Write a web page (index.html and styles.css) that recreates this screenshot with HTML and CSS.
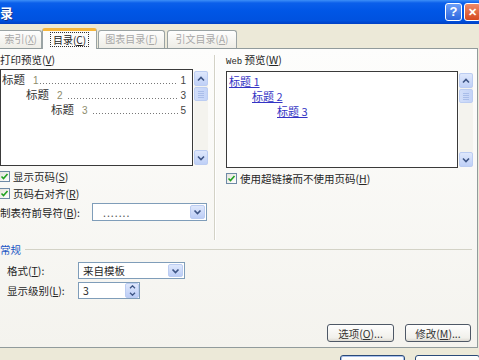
FILE: index.html
```html
<!DOCTYPE html>
<html lang="zh-CN">
<head>
  <meta charset="UTF-8">
  <title>索引和目录</title>
  <link rel="stylesheet" href="styles.css">
</head>
<body>
<div class="window">
  <div class="titlebar">
    <span class="title">索引和目录</span>
    <span class="caption-btn help">?</span>
    <span class="caption-btn close">✕</span>
  </div>

  <div class="tabs">
    <span class="tab t1">索引(<u>X</u>)</span>
    <span class="tab active"><span class="focus">目录(<u>C</u>)</span></span>
    <span class="tab t3">图表目录(<u>F</u>)</span>
    <span class="tab t4">引文目录(<u>A</u>)</span>
  </div>

  <div class="panel">
    <div class="previews">
      <div class="col print-col">
        <div class="label">打印预览(<u>V</u>)</div>
        <div class="preview-row">
          <div class="preview-box print">
            <div class="toc-line lvl1"><span class="h">标题</span><span class="n">1</span><span class="dots"></span><span class="pg">1</span></div>
            <div class="toc-line lvl2"><span class="h">标题</span><span class="n">2</span><span class="dots"></span><span class="pg">3</span></div>
            <div class="toc-line lvl3"><span class="h">标题</span><span class="n">3</span><span class="dots"></span><span class="pg">5</span></div>
          </div>
          <div class="scrollbar">
            <span class="sb-btn"><svg width="8" height="6" viewBox="0 0 8 6"><path d="M1 4.5 L4 1.5 L7 4.5" fill="none" stroke="#3e5585" stroke-width="1.6"/></svg></span>
            <span class="sb-thumb"></span>
            <span class="sb-track"></span>
            <span class="sb-btn"><svg width="8" height="6" viewBox="0 0 8 6"><path d="M1 1.5 L4 4.5 L7 1.5" fill="none" stroke="#3e5585" stroke-width="1.6"/></svg></span>
          </div>
        </div>
        <label class="check first"><span class="cbox"><svg width="9" height="9" viewBox="0 0 9 9"><path d="M1.5 4.5 L3.5 6.5 L7.5 2" fill="none" stroke="#21a121" stroke-width="1.6"/></svg></span>显示页码(<u>S</u>)</label>
        <label class="check"><span class="cbox"><svg width="9" height="9" viewBox="0 0 9 9"><path d="M1.5 4.5 L3.5 6.5 L7.5 2" fill="none" stroke="#21a121" stroke-width="1.6"/></svg></span>页码右对齐(<u>R</u>)</label>
        <div class="field leader-row">
          <span class="field-label">制表符前导符(<u>B</u>):</span>
          <div class="combo leader">
            <span class="combo-text">.......</span>
            <span class="combo-btn"><svg width="9" height="6" viewBox="0 0 9 6"><path d="M1.5 1.5 L4.5 4.5 L7.5 1.5" fill="none" stroke="#3e5585" stroke-width="1.7"/></svg></span>
          </div>
        </div>
      </div>

      <div class="vsep"></div>

      <div class="col web-col">
        <div class="label"><span class="web">Web</span> 预览(<u>W</u>)</div>
        <div class="preview-row">
          <div class="preview-box web-box">
            <div class="web-line lvl1"><a>标题 1</a></div>
            <div class="web-line lvl2"><a>标题 2</a></div>
            <div class="web-line lvl3"><a>标题 3</a></div>
          </div>
          <div class="scrollbar">
            <span class="sb-btn"><svg width="8" height="6" viewBox="0 0 8 6"><path d="M1 4.5 L4 1.5 L7 4.5" fill="none" stroke="#3e5585" stroke-width="1.6"/></svg></span>
            <span class="sb-thumb"></span>
            <span class="sb-track"></span>
            <span class="sb-btn"><svg width="8" height="6" viewBox="0 0 8 6"><path d="M1 1.5 L4 4.5 L7 1.5" fill="none" stroke="#3e5585" stroke-width="1.6"/></svg></span>
          </div>
        </div>
        <label class="check first"><span class="cbox"><svg width="9" height="9" viewBox="0 0 9 9"><path d="M1.5 4.5 L3.5 6.5 L7.5 2" fill="none" stroke="#21a121" stroke-width="1.6"/></svg></span>使用超链接而不使用页码(<u>H</u>)</label>
      </div>
    </div>

    <div class="section-head"><span>常规</span><span class="section-line"></span></div>

    <div class="field general-row first">
      <span class="field-label">格式(<u>T</u>):</span>
      <div class="combo format">
        <span class="combo-text">来自模板</span>
        <span class="combo-btn"><svg width="9" height="6" viewBox="0 0 9 6"><path d="M1.5 1.5 L4.5 4.5 L7.5 1.5" fill="none" stroke="#3e5585" stroke-width="1.7"/></svg></span>
      </div>
    </div>
    <div class="field general-row">
      <span class="field-label">显示级别(<u>L</u>):</span>
      <div class="combo spin">
        <span class="combo-text">3</span>
        <span class="spin-btn">
          <svg width="7" height="4" viewBox="0 0 7 4"><path d="M1 3.2 L3.5 0.8 L6 3.2" fill="none" stroke="#3e5585" stroke-width="1.3"/></svg>
          <svg width="7" height="4" viewBox="0 0 7 4"><path d="M1 0.8 L3.5 3.2 L6 0.8" fill="none" stroke="#3e5585" stroke-width="1.3"/></svg>
        </span>
      </div>
    </div>

    <div class="actions">
      <button class="btn options">选项(<u>O</u>)...</button>
      <button class="btn modify">修改(<u>M</u>)...</button>
    </div>
  </div>

  <div class="footer">
    <button class="btn big default">确定</button>
    <button class="btn big">取消</button>
  </div>
</div>
</body>
</html>
```

FILE: styles.css
```css
* {
  box-sizing: border-box;
}

html, body {
  margin: 0;
}

body {
  width: 479px;
  height: 360px;
  overflow: hidden;
  background-color: #ece9d8;
  font-family: "Noto Sans CJK SC", "Liberation Sans", sans-serif;
  font-size: 10.5px;
  color: #262626;
}

.window {
  width: 500px;
  margin-left: -12px;
}

/* title bar */
.titlebar {
  height: 24px;
  display: flex;
  align-items: center;
  padding-right: 7px;
  background: linear-gradient(#3d8ff8 0, #0b5fea 3px, #0056e6 45%, #0052df 85%, #0040c4 100%);
}

.title {
  flex: 1;
  margin-left: -40px;
  color: #fff;
  font-weight: bold;
  font-size: 13px;
  text-shadow: 1px 1px #10308a;
  white-space: nowrap;
}

.caption-btn {
  width: 17px;
  height: 18px;
  border: 1px solid #fff;
  border-radius: 3px;
  color: #fff;
  font: bold 13px/16px "Liberation Sans", sans-serif;
  text-align: center;
}

.help {
  background: linear-gradient(#6d9ff7, #2c66de);
  margin-right: 2px;
}

.close {
  background: linear-gradient(#ee8a68, #d5481f);
  font-size: 11px;
}

/* tabs */
.tabs {
  display: flex;
  align-items: flex-end;
  height: 24px;
  padding-left: 4px;
}

.tab {
  height: 18px;
  border: 1px solid #9aa3a4;
  border-bottom: none;
  border-radius: 3px 3px 0 0;
  background: linear-gradient(#fefefe, #eeede6);
  color: #a8a8a8;
  font-size: 10px;
  line-height: 16px;
  text-align: center;
  white-space: nowrap;
}

.t1 { width: 50px; text-align: right; padding-right: 4px; }
.t3 { width: 67px; margin-left: 1px; }
.t4 { width: 70px; margin-left: 2px; }

.tab.active {
  position: relative;
  z-index: 1;
  width: 55px;
  height: 21px;
  margin-bottom: -1px;
  border-top: 3px solid #f5b63c;
  background: #fcfcfb;
  color: #222;
  padding-top: 1px;
}

.focus {
  display: inline-block;
  border: 1px dotted #333;
  line-height: 13px;
  padding: 0 2px;
}

/* panel */
.panel {
  margin-left: 2px;
  width: 488px;
  height: 300px;
  border: 1px solid #919b9c;
  background: linear-gradient(#fdfdfc, #f4f3ee);
  padding: 4px 4px 0 9px;
}

.previews {
  display: flex;
  height: 187px;
}

.print-col { width: 208px; }
.web-col { width: 247px; }

.vsep {
  width: 2px;
  height: 185px;
  margin: 2px 10px 0 6px;
  border-left: 1px solid #d3d2c6;
  border-right: 1px solid #fff;
}

.label {
  line-height: 14px;
  margin-bottom: 2px;
  white-space: nowrap;
}

.web {
  font-family: "Liberation Mono", monospace;
  font-size: 9px;
}

.preview-row {
  display: flex;
  height: 97px;
}

.preview-box {
  border: 1px solid #3a3a3a;
  background-color: #fff;
  padding-top: 2px;
}

.print { width: 193px; }
.web-box { width: 232px; padding-left: 1px; }

.toc-line {
  display: flex;
  align-items: baseline;
  height: 15px;
  padding-right: 6px;
}

.toc-line .h {
  font-size: 11.5px;
  line-height: 15px;
  color: #333;
}

.toc-line .n {
  margin-left: 8px;
  font: 10px "Liberation Sans", sans-serif;
  color: #8d8c6a;
}

.toc-line .dots {
  flex: 1;
  height: 8px;
  margin: 0 2px 0 1px;
  background-image: linear-gradient(to right, #777 1px, transparent 1px);
  background-size: 3px 1px;
  background-repeat: repeat-x;
  background-position: left bottom;
}

.lvl2 .n, .lvl3 .n { margin-right: 4px; }

.toc-line .pg {
  font: 10px "Liberation Sans", sans-serif;
  color: #444;
}

.lvl1 { padding-left: 1px; }
.lvl2 { padding-left: 25px; }
.lvl3 { padding-left: 50px; }

.web-line {
  height: 15px;
  line-height: 15px;
  font-size: 11px;
}

.web-line a {
  color: #3434c4;
  text-decoration: underline;
}

.web-line.lvl2 { padding-left: 24px; }
.web-line.lvl3 { padding-left: 49px; }

/* scrollbar */
.scrollbar {
  width: 14px;
  margin: 2px 0 1px 1px;
  display: flex;
  flex-direction: column;
  background-color: #f4f3ee;
}

.sb-btn {
  height: 15px;
  display: flex;
  align-items: center;
  justify-content: center;
  border: 1px solid #bccdf2;
  border-radius: 2px;
  background: linear-gradient(#dfe8fc, #bfd0f7);
}

.sb-thumb {
  height: 14px;
  margin-top: 1px;
  border: 1px solid #bccdf2;
  border-radius: 2px;
  background:
    repeating-linear-gradient(#a9bde9 0 1px, transparent 1px 2px) center / 6px 7px no-repeat,
    linear-gradient(to right, #d2def9, #c4d4f8);
}

.sb-track {
  flex: 1;
}

/* checkboxes */
.check {
  display: flex;
  align-items: center;
  height: 17px;
  margin-left: -1px;
  white-space: nowrap;
}

.check.first { margin-top: 2px; }

.cbox {
  width: 11px;
  height: 11px;
  margin-right: 3px;
  border: 1px solid #6e8aa6;
  background: linear-gradient(135deg, #e4e3dc, #fff);
  display: flex;
  align-items: center;
  justify-content: center;
}

.web-col .check { margin-left: 0; }

/* fields */
.field {
  display: flex;
  align-items: center;
  white-space: nowrap;
}

.leader-row {
  margin-top: 1px;
}

.leader-row .field-label { width: 92px; }

.combo {
  display: flex;
  align-items: center;
  height: 18px;
  border: 1px solid #7f9db9;
  background-color: #fff;
}

.combo-text {
  flex: 1;
  padding-left: 4px;
}

.leader { width: 115px; }
.leader .combo-text { padding-left: 10px; letter-spacing: 1px; color: #555; }

.combo-btn {
  width: 15px;
  height: 14px;
  margin-right: 1px;
  display: flex;
  align-items: center;
  justify-content: center;
  border: 1px solid #bccdf2;
  border-radius: 2px;
  background: linear-gradient(#dfe8fc, #bccdf6);
}

/* general section */
.section-head {
  display: flex;
  align-items: center;
  height: 14px;
  margin: 2px 1px 0 0;
  color: #2155c4;
  font-size: 10.5px;
}

.section-line {
  flex: 1;
  height: 1px;
  margin-left: 4px;
  background-color: #d3d2c6;
}

.general-row {
  margin-left: 7px;
  margin-top: 3px;
}

.general-row.first { margin-top: 6px; }

.general-row .field-label { width: 71px; }

.general-row .combo { height: 17px; }

.format { width: 107px; }
.format .combo-btn { height: 13px; }

.spin { width: 62px; }

.spin-btn {
  width: 14px;
  height: 15px;
  display: flex;
  flex-direction: column;
  align-items: center;
  justify-content: space-around;
  border: 1px solid #bccdf2;
  border-radius: 2px;
  background: linear-gradient(#dfe8fc, #bccdf6);
}

/* buttons */
.actions {
  display: flex;
  justify-content: flex-end;
  gap: 11px;
  margin-top: 25px;
  padding-right: 2px;
}

.btn {
  height: 18px;
  padding: 0;
  border: 1px solid #4e5866;
  border-radius: 3px;
  background: linear-gradient(#fefefe, #f1f0eb 80%, #dcdad2);
  font-family: "Noto Sans CJK SC", "Liberation Mono", sans-serif;
  font-size: 10.5px;
  color: #333;
}

.options { width: 67px; }
.modify { width: 66px; }

.footer {
  display: flex;
  justify-content: flex-end;
  gap: 10px;
  padding: 7px 8px 0 0;
}

.btn.big {
  width: 65px;
  height: 24px;
  padding-top: 10px;
  border-color: #2a4a78;
}

.btn.default {
  box-shadow: inset 0 0 0 1px #a9c0ec;
}
```
